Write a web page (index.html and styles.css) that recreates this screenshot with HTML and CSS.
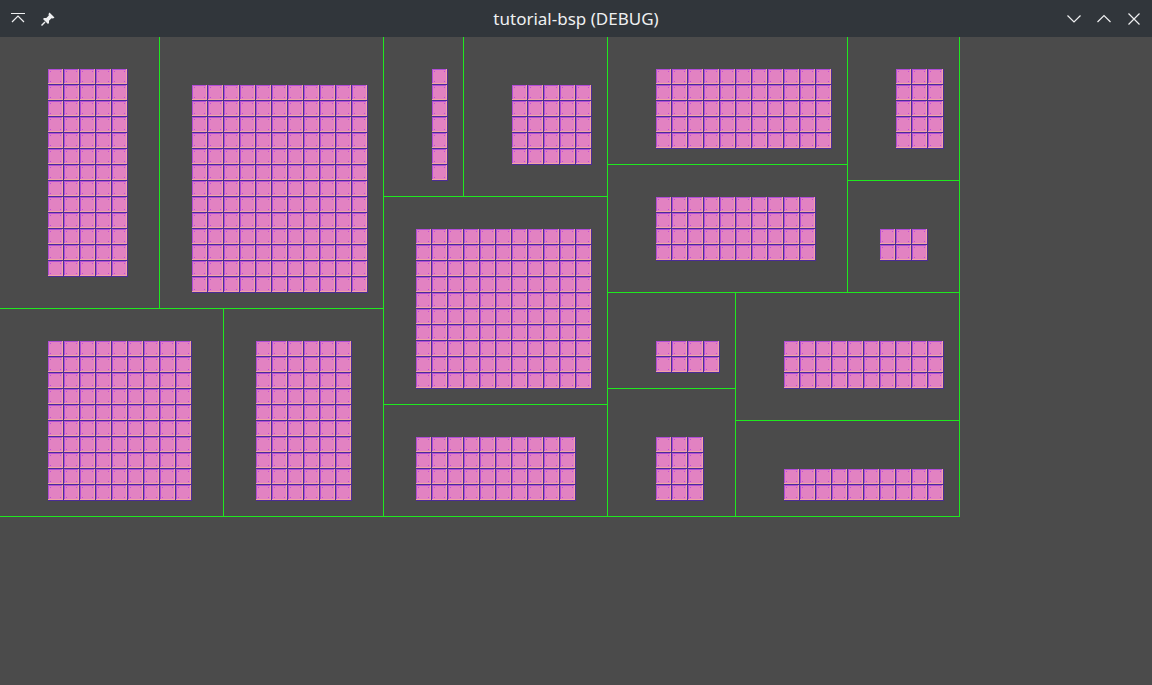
FILE: index.html
```html
<!DOCTYPE html>
<html>
<head>
<meta charset="utf-8">
<title>tutorial-bsp (DEBUG)</title>
<link rel="stylesheet" href="styles.css">
</head>
<body>
<svg class="defs" width="0" height="0" aria-hidden="true">
  <defs>
    <pattern id="tile" width="16" height="16" patternUnits="userSpaceOnUse">
      <rect width="16" height="16" fill="#4a2c98"/>
      <rect width="15" height="15" fill="#f0a4a4"/>
      <rect width="14" height="14" fill="#b04cd6"/>
      <rect x="1" y="1" width="13" height="13" fill="#e282c2"/>
      <rect x="2" y="2" width="1" height="1" fill="#c04ada"/>
      <rect x="12" y="2" width="1" height="1" fill="#c04ada"/>
      <rect x="2" y="12" width="1" height="1" fill="#c04ada"/>
      <rect x="12" y="12" width="1" height="1" fill="#c04ada"/>
    </pattern>
  </defs>
</svg>
<div class="window">
  <header class="titlebar">
    <div class="tb-left">
      <span class="tb-btn">
        <svg width="16" height="16" viewBox="0 0 16 16"><path d="M1 2.5H15M2 11L8 5L14 11" fill="none" stroke="#eff0f1" stroke-width="1.2"/></svg>
      </span>
      <span class="tb-btn">
        <svg width="16" height="16" viewBox="0 0 16 16"><path d="M9.5 1.5L14.5 6.5L13 7.5L11.5 7.2L9 9.7L9 12L8 13L3 8L4 7L6.3 7L8.8 4.5L8.5 3Z" fill="#eff0f1"/><path d="M5 11L1.5 14.5" stroke="#eff0f1" stroke-width="1.5"/></svg>
      </span>
    </div>
    <div class="title">tutorial-bsp (DEBUG)</div>
    <div class="tb-right">
      <span class="tb-btn">
        <svg width="16" height="16" viewBox="0 0 16 16"><path d="M1.5 4.5L8 11L14.5 4.5" fill="none" stroke="#eff0f1" stroke-width="1.2"/></svg>
      </span>
      <span class="tb-btn">
        <svg width="16" height="16" viewBox="0 0 16 16"><path d="M1.5 11L8 4.5L14.5 11" fill="none" stroke="#eff0f1" stroke-width="1.2"/></svg>
      </span>
      <span class="tb-btn">
        <svg width="16" height="16" viewBox="0 0 16 16"><path d="M2.5 2.5L13.5 13.5M13.5 2.5L2.5 13.5" fill="none" stroke="#eff0f1" stroke-width="1.2"/></svg>
      </span>
    </div>
  </header>
  <main class="viewport">
    <div class="map">
      <div class="col" style="width:384px">
        <div class="row" style="height:272px">
          <div class="leaf" style="width:160px"><svg class="room" width="80" height="208" style="margin:32px 0 0 48px"><rect width="100%" height="100%" fill="url(#tile)"/></svg></div>
          <div class="leaf" style="width:224px"><svg class="room" width="176" height="208" style="margin:48px 0 0 32px"><rect width="100%" height="100%" fill="url(#tile)"/></svg></div>
        </div>
        <div class="row" style="height:208px">
          <div class="leaf" style="width:224px"><svg class="room" width="144" height="160" style="margin:32px 0 0 48px"><rect width="100%" height="100%" fill="url(#tile)"/></svg></div>
          <div class="leaf" style="width:160px"><svg class="room" width="96" height="160" style="margin:32px 0 0 32px"><rect width="100%" height="100%" fill="url(#tile)"/></svg></div>
        </div>
      </div>
      <div class="col" style="width:224px">
        <div class="row" style="height:160px">
          <div class="leaf" style="width:80px"><svg class="room" width="16" height="112" style="margin:32px 0 0 48px"><rect width="100%" height="100%" fill="url(#tile)"/></svg></div>
          <div class="leaf" style="width:144px"><svg class="room" width="80" height="80" style="margin:48px 0 0 48px"><rect width="100%" height="100%" fill="url(#tile)"/></svg></div>
        </div>
        <div class="leaf" style="height:208px"><svg class="room" width="176" height="160" style="margin:32px 0 0 32px"><rect width="100%" height="100%" fill="url(#tile)"/></svg></div>
        <div class="leaf" style="height:112px"><svg class="room" width="160" height="64" style="margin:32px 0 0 32px"><rect width="100%" height="100%" fill="url(#tile)"/></svg></div>
      </div>
      <div class="col" style="width:352px">
        <div class="row" style="height:256px">
          <div class="col" style="width:240px">
            <div class="leaf" style="height:128px"><svg class="room" width="176" height="80" style="margin:32px 0 0 48px"><rect width="100%" height="100%" fill="url(#tile)"/></svg></div>
            <div class="leaf" style="height:128px"><svg class="room" width="160" height="64" style="margin:32px 0 0 48px"><rect width="100%" height="100%" fill="url(#tile)"/></svg></div>
          </div>
          <div class="col" style="width:112px">
            <div class="leaf" style="height:144px"><svg class="room" width="48" height="80" style="margin:32px 0 0 48px"><rect width="100%" height="100%" fill="url(#tile)"/></svg></div>
            <div class="leaf" style="height:112px"><svg class="room" width="48" height="32" style="margin:48px 0 0 32px"><rect width="100%" height="100%" fill="url(#tile)"/></svg></div>
          </div>
        </div>
        <div class="row" style="height:224px">
          <div class="col" style="width:128px">
            <div class="leaf" style="height:96px"><svg class="room" width="64" height="32" style="margin:48px 0 0 48px"><rect width="100%" height="100%" fill="url(#tile)"/></svg></div>
            <div class="leaf" style="height:128px"><svg class="room" width="48" height="64" style="margin:48px 0 0 48px"><rect width="100%" height="100%" fill="url(#tile)"/></svg></div>
          </div>
          <div class="col" style="width:224px">
            <div class="leaf" style="height:128px"><svg class="room" width="160" height="48" style="margin:48px 0 0 48px"><rect width="100%" height="100%" fill="url(#tile)"/></svg></div>
            <div class="leaf" style="height:96px"><svg class="room" width="160" height="32" style="margin:48px 0 0 48px"><rect width="100%" height="100%" fill="url(#tile)"/></svg></div>
          </div>
        </div>
      </div>
    </div>
  </main>
</div>
</body>
</html>
```
FILE: styles.css
```css
html, body {
  margin: 0;
  padding: 0;
  background: #4b4b4b;
}

.defs {
  display: block;
  width: 0;
  height: 0;
  overflow: hidden;
}

.window {
  width: 1152px;
  height: 685px;
  display: flex;
  flex-direction: column;
  overflow: hidden;
}

.titlebar {
  height: 37px;
  flex: none;
  background: #31363b;
  display: grid;
  grid-template-columns: 1fr auto 1fr;
  align-items: center;
  color: #eff0f1;
  font-family: "Noto Sans", sans-serif;
  font-size: 17px;
}

.tb-left {
  display: flex;
  gap: 14px;
  padding-left: 10px;
  justify-self: start;
}

.tb-right {
  display: flex;
  gap: 14px;
  padding-right: 10px;
  justify-self: end;
}

.tb-btn {
  width: 16px;
  height: 16px;
  display: flex;
}

.tb-btn svg {
  display: block;
}

.title {
  line-height: 37px;
  white-space: nowrap;
}

.viewport {
  flex: 1;
  background: #4b4b4b;
}

.map {
  width: 960px;
  height: 480px;
  display: flex;
}

.col {
  display: flex;
  flex-direction: column;
  flex: none;
}

.row {
  display: flex;
  flex: none;
}

.leaf {
  box-sizing: border-box;
  flex: none;
  border-right: 1px solid #1fe81f;
  border-bottom: 1px solid #1fe81f;
  display: flex;
  align-items: flex-start;
}

.row > .leaf {
  height: 100%;
}

.col > .leaf {
  width: 100%;
}

.room {
  display: block;
  flex: none;
}
```
